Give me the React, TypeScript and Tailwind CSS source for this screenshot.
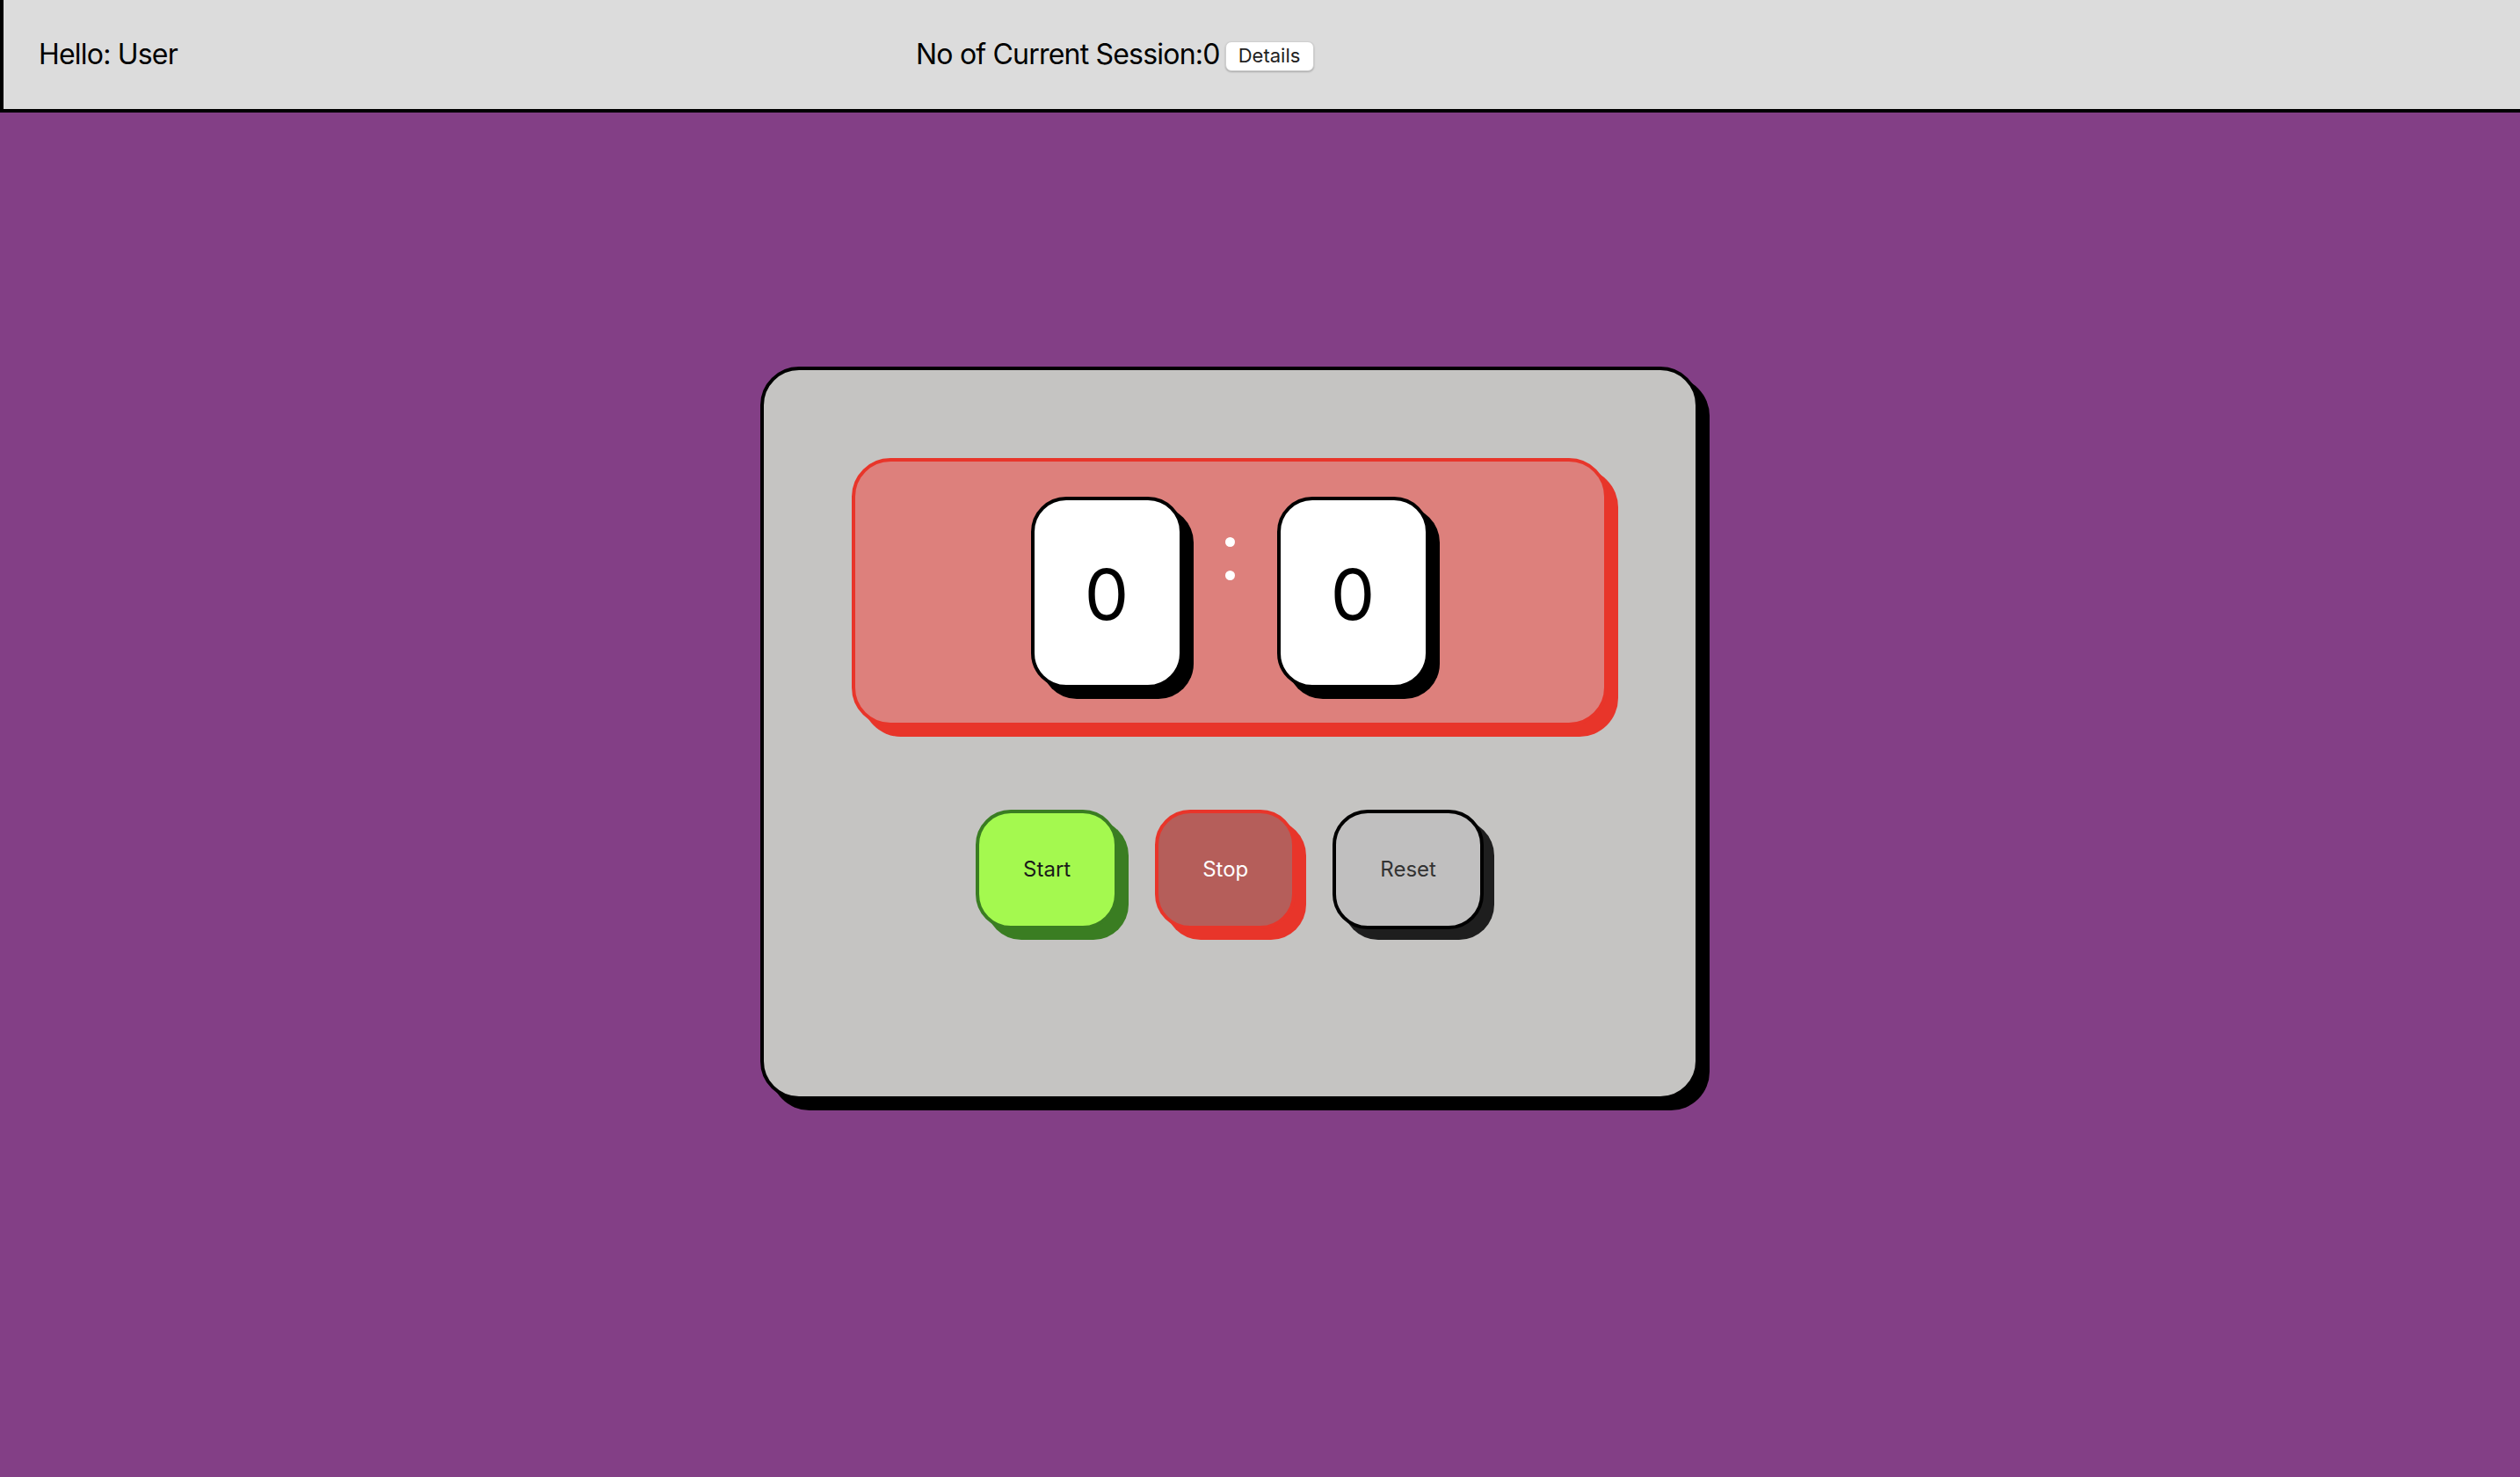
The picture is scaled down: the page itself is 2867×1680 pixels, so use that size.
import React from "react";

const font = { fontFamily: "Inter, 'Noto Sans', 'Liberation Sans', sans-serif" };

function DigitBox({ value }: { value: string }) {
  return (
    <div className="w-[173px] h-[218px] box-border border-4 border-black bg-white rounded-[40px] shadow-[12px_12px_0_#000] flex items-center justify-center pt-[5px] text-[80px] leading-none text-black font-normal">
      {value}
    </div>
  );
}

export default function App() {
  return (
    <div className="min-h-screen w-full bg-[#833f86]" style={font}>
      <header className="h-[128px] box-border border-l-4 border-b-4 border-black bg-[#dcdcdc] flex items-center text-[32px] tracking-[-0.8px] text-black">
        <div className="w-[1038px] pl-[40px] box-border">Hello: User</div>
        <div className="flex items-center">
          <span>No of Current Session:0</span>
          <button className="ml-[6px] mt-[3px] h-[34px] w-[101px] bg-white rounded-[7px] border border-[#cfcfcf] shadow-[0_1px_2px_rgba(0,0,0,0.25)] text-[22px] tracking-normal text-[#222] flex items-center justify-center">
            Details
          </button>
        </div>
      </header>

      <div className="pl-[865px] pt-[289px] pb-[100px]">
        <div className="w-[1068px] h-[834px] box-border border-4 border-black rounded-[44px] bg-[#c5c4c2] shadow-[12px_12px_0_#000] p-[100px]">
          <div className="h-[305px] box-border border-4 border-[#e8352a] bg-[#dd807c] rounded-[44px] shadow-[12px_12px_0_#e8352a] flex items-center justify-center gap-[48px]">
            <DigitBox value="0" />
            <div className="self-start mt-[86px] flex flex-col gap-[27px]">
              <div className="w-[11px] h-[11px] rounded-full bg-white" />
              <div className="w-[11px] h-[11px] rounded-full bg-white" />
            </div>
            <DigitBox value="0" />
          </div>

          <div className="mt-[95px] flex justify-center gap-[42px]">
            <button className="h-[136px] px-[50px] box-border border-4 border-[#3a7d22] bg-[#a4f94f] rounded-[40px] shadow-[12px_12px_0_#3a7d22] text-[24px] text-[#1a1a1a]">
              Start
            </button>
            <button className="h-[136px] px-[50px] box-border border-4 border-[#e8352a] bg-[#b55e5a] rounded-[40px] shadow-[12px_12px_0_#e8352a] text-[24px] text-white">
              Stop
            </button>
            <button className="h-[136px] px-[50px] box-border border-4 border-black bg-[#c0bfbf] rounded-[40px] shadow-[12px_12px_0_#1e1e1e] text-[24px] text-[#333]">
              Reset
            </button>
          </div>
        </div>
      </div>
    </div>
  );
}
